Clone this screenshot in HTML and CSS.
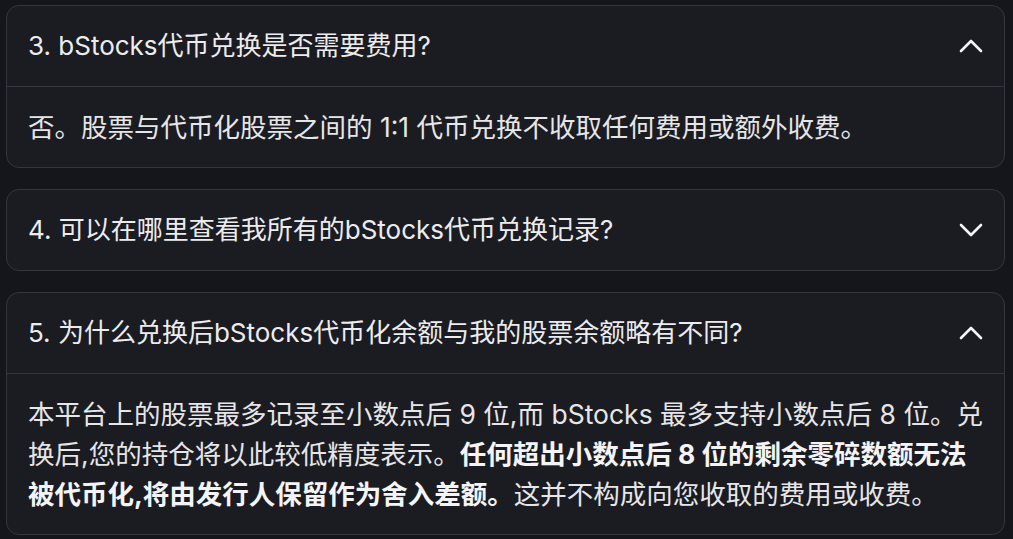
FILE: index.html
```html
<!DOCTYPE html>
<html lang="zh-CN">
<head>
    <meta charset="UTF-8">
    <meta name="viewport" content="width=device-width, initial-scale=1.0">
    <title>bStocks 常见问题</title>
    <link rel="stylesheet" href="styles.css">
</head>
<body>
    <div class="faq-list">
        <!-- 问题 3 -->
        <div class="faq-item open">
            <div class="faq-header">
                <span class="faq-question">3. bStocks代币兑换是否需要费用?</span>
                <svg class="chevron" viewBox="0 0 24 14"><path d="M2 12 L12 2 L22 12"/></svg>
            </div>
            <div class="faq-answer">否。股票与代币化股票之间的 1:1 代币兑换不收取任何费用或额外收费。</div>
        </div>

        <!-- 问题 4 -->
        <div class="faq-item">
            <div class="faq-header">
                <span class="faq-question">4. 可以在哪里查看我所有的bStocks代币兑换记录?</span>
                <svg class="chevron" viewBox="0 0 24 14"><path d="M2 2 L12 12 L22 2"/></svg>
            </div>
        </div>

        <!-- 问题 5 -->
        <div class="faq-item open">
            <div class="faq-header">
                <span class="faq-question">5. 为什么兑换后bStocks代币化余额与我的股票余额略有不同?</span>
                <svg class="chevron" viewBox="0 0 24 14"><path d="M2 12 L12 2 L22 12"/></svg>
            </div>
            <div class="faq-answer">本平台上的股票最多记录至小数点后 9 位,而 bStocks 最多支持小数点后 8 位。兑换后,您的持仓将以此较低精度表示。<strong>任何超出小数点后 8 位的剩余零碎数额无法被代币化,将由发行人保留作为舍入差额。</strong>这并不构成向您收取的费用或收费。</div>
        </div>
    </div>
</body>
</html>
```

FILE: styles.css
```css
* {
    margin: 0;
    padding: 0;
    box-sizing: border-box;
}

body {
    font-family: Inter, 'Noto Sans CJK SC', sans-serif;
    background: #15161b;
    color: #ececee;
    padding: 5px 8px 0 6px;
}

.faq-list {
    display: flex;
    flex-direction: column;
    gap: 21px;
}

.faq-item {
    background: #1b1c22;
    border: 1.5px solid #33363e;
    border-radius: 13px;
}

.faq-header {
    display: flex;
    align-items: center;
    justify-content: space-between;
    padding: 20px 21px 20px 21px;
    font-size: 26px;
    line-height: 40px;
}

.open .faq-header {
    border-bottom: 1.5px solid #33363e;
}

.chevron {
    width: 24px;
    height: 14px;
    fill: none;
    stroke: #f4f4f6;
    stroke-width: 2.6;
    stroke-linecap: round;
    stroke-linejoin: round;
    flex-shrink: 0;
}

.faq-answer {
    padding: 20px 18px 20px 21px;
    font-size: 26.5px;
    line-height: 40px;
    color: #e6e6e8;
}

.faq-answer strong {
    font-weight: 700;
    color: #f4f4f6;
}
```
